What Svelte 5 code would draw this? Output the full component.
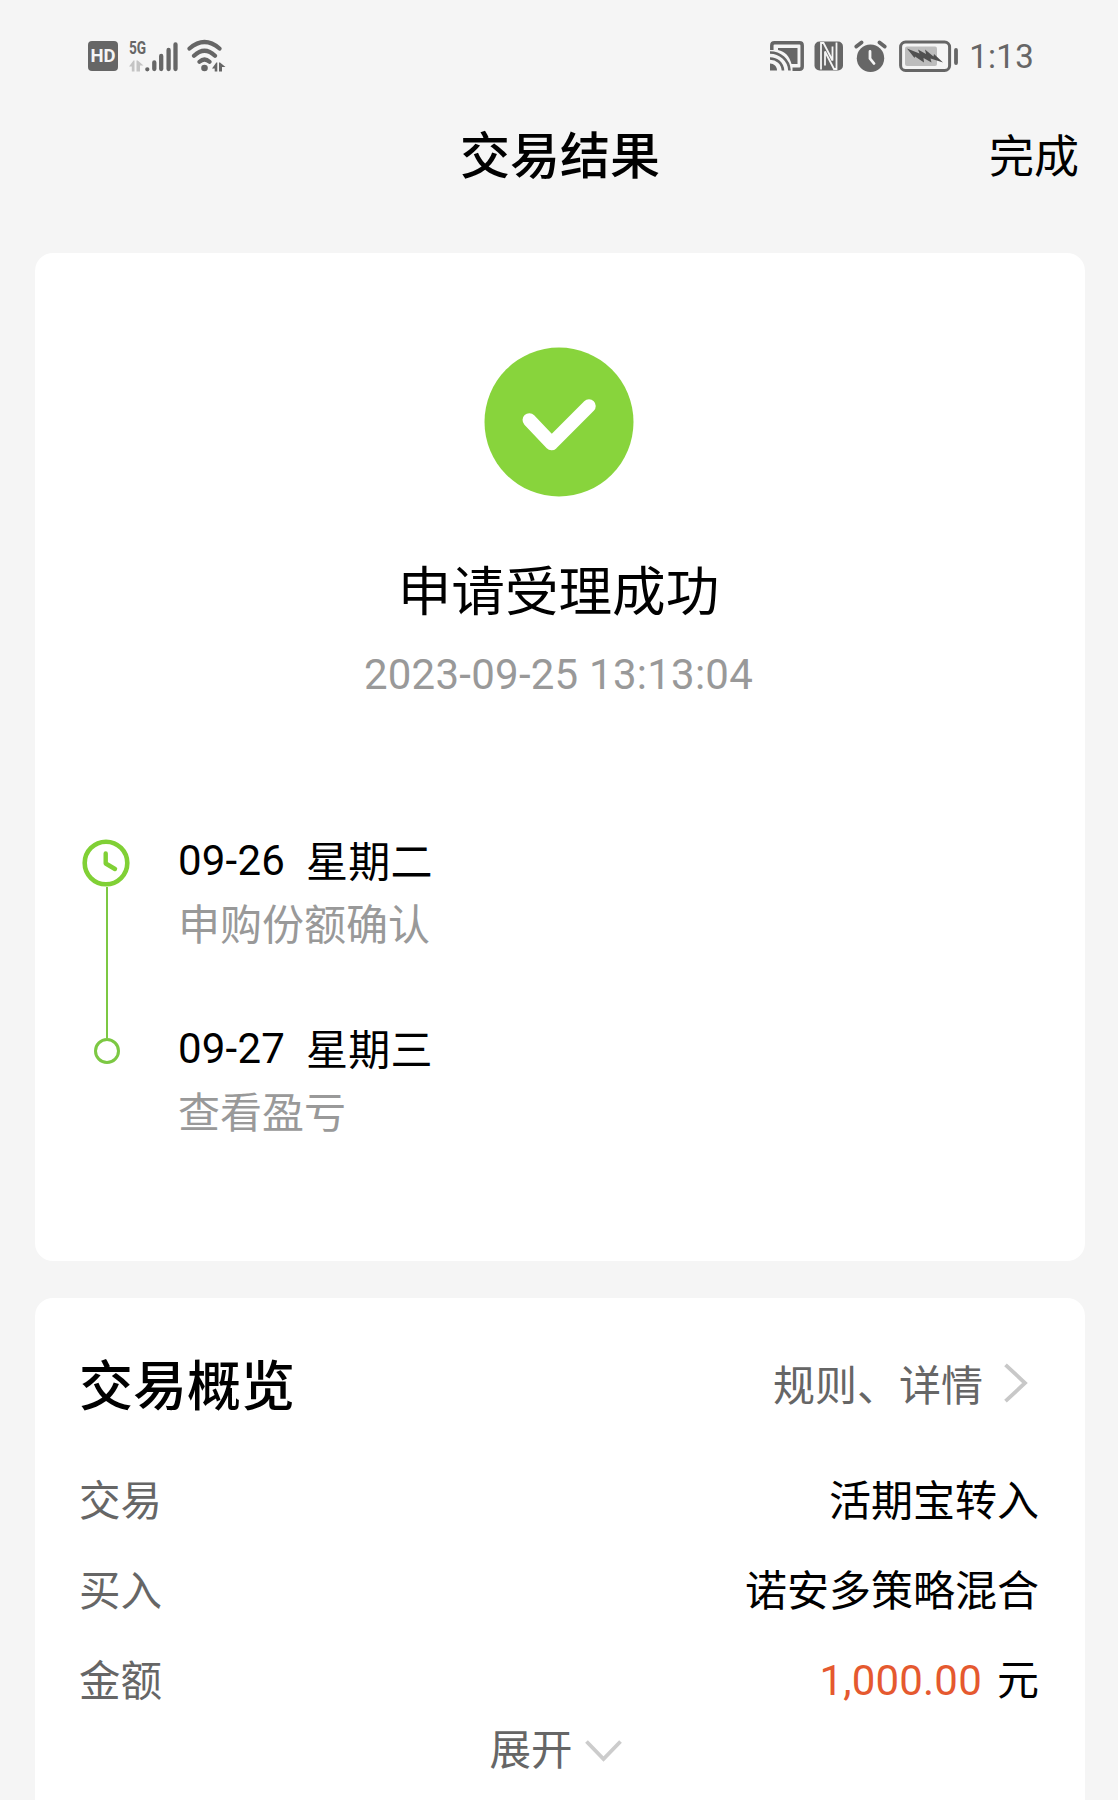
<script lang="ts">
  type Step = { date: string; weekday: string; label: string };
  type Row = { name: string; value: string; unit?: string };

  const steps: Step[] = [
    { date: "09-26", weekday: "星期二", label: "申购份额确认" },
    { date: "09-27", weekday: "星期三", label: "查看盈亏" },
  ];

  const rows: Row[] = [
    { name: "交易", value: "活期宝转入" },
    { name: "买入", value: "诺安多策略混合" },
    { name: "金额", value: "1,000.00", unit: "元" },
  ];
</script>

<div class="page">
  <div class="status-bar">
    <div class="status-left">
      <span class="hd">HD</span>
      <div class="network">
        <div class="network-type">
          <span class="five-g">5G</span>
          <svg width="15" height="12" viewBox="0 0 15 12" fill="#c4c4c4">
            <path d="M0 6.500L4.500 0.500H5.500V11.500H2.800V6.500zM7.500 0.500H8.700L14.500 5.500H11V11.500H7.500z" />
          </svg>
        </div>
        <svg width="34" height="32" viewBox="0 0 34 32" stroke="#666" stroke-width="4.300" stroke-linecap="round">
          <path d="M3.300 29.300v0M10.300 29V22.500M17.200 29V16M24.600 29V10M31.500 29V4.500" />
        </svg>
      </div>
      <svg class="wifi" width="40" height="34" viewBox="0 0 40 34" fill="none" stroke="#666" stroke-width="4.200" stroke-linecap="round">
        <path d="M3.500 9.500Q18.500 -3.500 33.500 9.500M8 16.800Q18.500 6.800 29 16.800M13.500 22.800Q18.500 18.300 23.500 22.800" />
        <circle cx="18.500" cy="29" r="3.300" fill="#666" stroke="none" />
        <path d="M26 29.500L30.300 23.500H31.300V32.500H28.700V29.500zM33 23.500H34L39.500 28H36V32.500H33z" fill="#666" stroke="none" />
      </svg>
    </div>
    <div class="status-right">
      <svg width="34" height="30" viewBox="0 0 34 30" fill="none" stroke="#666">
        <path d="M1.800 9V4.500Q1.800 1.800 4.500 1.800H29.500Q32.200 1.800 32.200 4.500V25.500Q32.200 28.200 29.500 28.200H22.500" stroke-width="3.500" />
        <path d="M8 7H27.500V23H21.500C19.500 15 15 10.500 8 9z" fill="#666" stroke="none" />
        <path d="M0 11.500C10 11.500 19 19 19.500 29.500M0 17.500C7 17.500 12.500 22 13 29.500" stroke-width="2.600" />
        <path d="M0 22.500C4 22.500 7 25.500 7 29.500H0z" fill="#666" stroke="none" />
      </svg>
      <svg class="nfc" width="30" height="30" viewBox="0 0 30 30">
        <rect x="0.500" y="0.500" width="28.500" height="29" rx="5" fill="#666" />
        <path d="M7 28.500V2H9.500L18.500 19.500V5.500M22.500 1.500V28H20L11 10.500V24.500" fill="none" stroke="#f5f5f5" stroke-width="1.800" />
      </svg>
      <svg class="alarm" width="34" height="32" viewBox="0 0 34 32" fill="none" stroke-linecap="round">
        <circle cx="16.500" cy="18.300" r="13.700" fill="#666" />
        <path d="M2.300 6.500L7.500 2.500M25.500 2.500L30.700 6.500" stroke="#666" stroke-width="3.800" />
        <path d="M16 11.500V18.500L20 23.500" stroke="#f5f5f5" stroke-width="2.800" />
      </svg>
      <svg class="battery" width="60" height="32" viewBox="0 0 60 32" fill="none">
        <rect x="1.600" y="2" width="49" height="28.500" rx="5" stroke="#666" stroke-width="3" />
        <rect x="6" y="6.500" width="32" height="19.500" rx="2" fill="#bdbdbd" />
        <path d="M8 8.500L20.500 13.500L19 9.500L27 14L26 9.500L34.500 16.500L35 14L44 22.500L31.500 18.500L32.500 22.500L24.500 18L25 22.500L16 16.500L15.500 18z" fill="#505050" />
        <path d="M57 10V23" stroke="#666" stroke-width="3.800" stroke-linecap="round" />
      </svg>
      <span class="clock">1:13</span>
    </div>
  </div>

  <header class="header">
    <h1>交易结果</h1>
    <span class="done">完成</span>
  </header>

  <section class="card result">
    <svg class="success" width="150" height="150" viewBox="0 0 150 150" fill="none">
      <circle cx="75" cy="75" r="74.500" fill="#88d43c" />
      <path d="M45.300 73L67.600 96.500L105 59" stroke="#fff" stroke-width="13.500" stroke-linecap="round" stroke-linejoin="round" />
    </svg>
    <h2>申请受理成功</h2>
    <p class="time">2023-09-25 13:13:04</p>

    <div class="steps">
      {#each steps as step, i}
        <div class="step">
          <div class="marker">
            {#if i === 0}
              <svg class="step-clock" width="48" height="48" viewBox="0 0 48 48" fill="none" stroke="#80d035" stroke-linecap="round" stroke-linejoin="round">
                <circle cx="24" cy="24" r="21.300" stroke-width="4.600" />
                <path d="M23.700 14.500V24.500L33 30" stroke-width="4.400" />
              </svg>
              <div class="line"></div>
            {:else}
              <div class="line short"></div>
              <div class="dot"></div>
            {/if}
          </div>
          <div class="step-text">
            <div class="step-date">
              <span>{step.date}</span>
              <span>{step.weekday}</span>
            </div>
            <div class="step-label">{step.label}</div>
          </div>
        </div>
      {/each}
    </div>
  </section>

  <section class="card overview">
    <div class="overview-head">
      <h2>交易概览</h2>
      <div class="detail-link">
        <span>规则、详情</span>
        <svg width="24" height="40" viewBox="0 0 24 40" fill="none" stroke="#c8c8c8" stroke-width="3.800">
          <path d="M1.500 1.800L21 20L1.500 38.200" />
        </svg>
      </div>
    </div>
    {#each rows as row}
      <div class="row">
        <span class="name">{row.name}</span>
        {#if row.unit}
          <span class="value"><span class="amount">{row.value}</span>{row.unit}</span>
        {:else}
          <span class="value">{row.value}</span>
        {/if}
      </div>
    {/each}
    <div class="expand">
      <span>展开</span>
      <svg width="37" height="22" viewBox="0 0 37 22" fill="none" stroke="#ccc" stroke-width="3.800">
        <path d="M1.500 1.500L18.500 19L35.500 1.500" />
      </svg>
    </div>
  </section>
</div>

<style>
  :global(body) {
    margin: 0;
    background: #f5f5f5;
  }

  .page {
    width: 1118px;
    height: 1800px;
    overflow: hidden;
    background: #f5f5f5;
    color: #000;
    font-family: Roboto, "Noto Sans CJK SC", sans-serif;
    font-size: 42px;
    line-height: 50px;
  }

  h1,
  h2,
  p {
    margin: 0;
  }

  svg {
    display: block;
    flex: none;
  }

  .status-bar {
    box-sizing: border-box;
    height: 110px;
    padding: 1px 84px 0 88px;
    display: flex;
    align-items: center;
    justify-content: space-between;
    color: #666;
  }

  .status-left,
  .status-right,
  .network {
    display: flex;
    align-items: center;
  }

  .hd {
    width: 30px;
    height: 30px;
    border-radius: 4px;
    background: #666;
    color: #f5f5f5;
    font-size: 18.5px;
    font-weight: 700;
    line-height: 31px;
    text-align: center;
  }

  .network {
    margin-left: 11px;
  }

  .network-type {
    width: 15px;
    height: 32px;
    display: flex;
    flex-direction: column;
    justify-content: space-between;
  }

  .five-g {
    font-size: 19px;
    font-weight: 700;
    line-height: 16px;
    transform: scaleX(0.72);
    transform-origin: left;
  }

  .wifi {
    margin-left: 8px;
  }

  .nfc {
    margin-left: 10px;
  }

  .alarm {
    margin-left: 10px;
  }

  .battery {
    margin-left: 11px;
  }

  .clock {
    margin-left: 10px;
    padding-top: 2px;
    font-size: 33px;
    letter-spacing: 0.3px;
  }

  .header {
    height: 88px;
    padding: 6px 39px 0 41px;
    box-sizing: border-box;
    display: grid;
    grid-template-columns: 1fr auto 1fr;
    align-items: center;
  }

  .header h1 {
    grid-column: 2;
    font-size: 50px;
    font-weight: 500;
  }

  .done {
    justify-self: end;
    padding-top: 1px;
    font-size: 45px;
  }

  .card {
    box-sizing: border-box;
    width: 1050px;
    margin-left: 35px;
    border-radius: 18px;
    background: #fff;
  }

  .result {
    height: 1008px;
    margin-top: 55px;
    padding: 94px 3px 0 0;
    display: flex;
    flex-direction: column;
    align-items: center;
  }

  .result h2 {
    margin-top: 64px;
    font-size: 53.6px;
    font-weight: 400;
    line-height: 64px;
  }

  .time {
    margin-top: 25px;
    color: #999;
    letter-spacing: 0.25px;
  }

  .steps {
    align-self: stretch;
    margin-top: 136px;
    padding-left: 45px;
  }

  .step {
    height: 188px;
    display: flex;
  }

  .marker {
    width: 54px;
    display: flex;
    flex-direction: column;
    align-items: center;
  }

  .step-clock {
    margin: 3px 2px 0 0;
  }

  .line {
    width: 2px;
    flex: 1;
    background: #7cc843;
  }

  .line.short {
    flex: none;
    height: 14px;
  }

  .dot {
    box-sizing: border-box;
    width: 26px;
    height: 26px;
    border: 3px solid #7cc843;
    border-radius: 50%;
  }

  .step-text {
    margin-left: 44px;
  }

  .step-date {
    display: flex;
    gap: 21px;
    letter-spacing: 0.2px;
  }

  .step-date span:last-child {
    padding-top: 2px;
    line-height: 50px;
    margin-bottom: -2px;
  }

  .step-label {
    margin-top: 15px;
    color: #999;
  }

  .overview {
    height: 600px;
    margin-top: 37px;
    padding: 57px 46px 0 44px;
  }

  .overview-head {
    height: 60px;
    margin-bottom: 40px;
    display: flex;
    align-items: center;
    justify-content: space-between;
  }

  .overview-head h2 {
    padding-top: 5px;
    font-size: 54px;
    font-weight: 500;
    line-height: 60px;
  }

  .detail-link {
    display: flex;
    align-items: center;
    gap: 21px;
    margin: -4px 11px 0 0;
    color: #666;
  }

  .detail-link span {
    padding-top: 7px;
  }

  .row {
    height: 90px;
    display: flex;
    align-items: center;
    justify-content: space-between;
  }

  .name,
  .value {
    padding-top: 4px;
  }

  .name {
    color: #666;
    font-size: 41.5px;
  }

  .row:nth-of-type(4) .value {
    padding-top: 2px;
  }

  .amount {
    margin-right: 15px;
    color: #e5592f;
    letter-spacing: 0.2px;
  }

  .expand {
    margin: 1px 7px 0 0;
    display: flex;
    align-items: center;
    justify-content: center;
    gap: 12px;
    color: #666;
    font-size: 41.5px;
  }
</style>
